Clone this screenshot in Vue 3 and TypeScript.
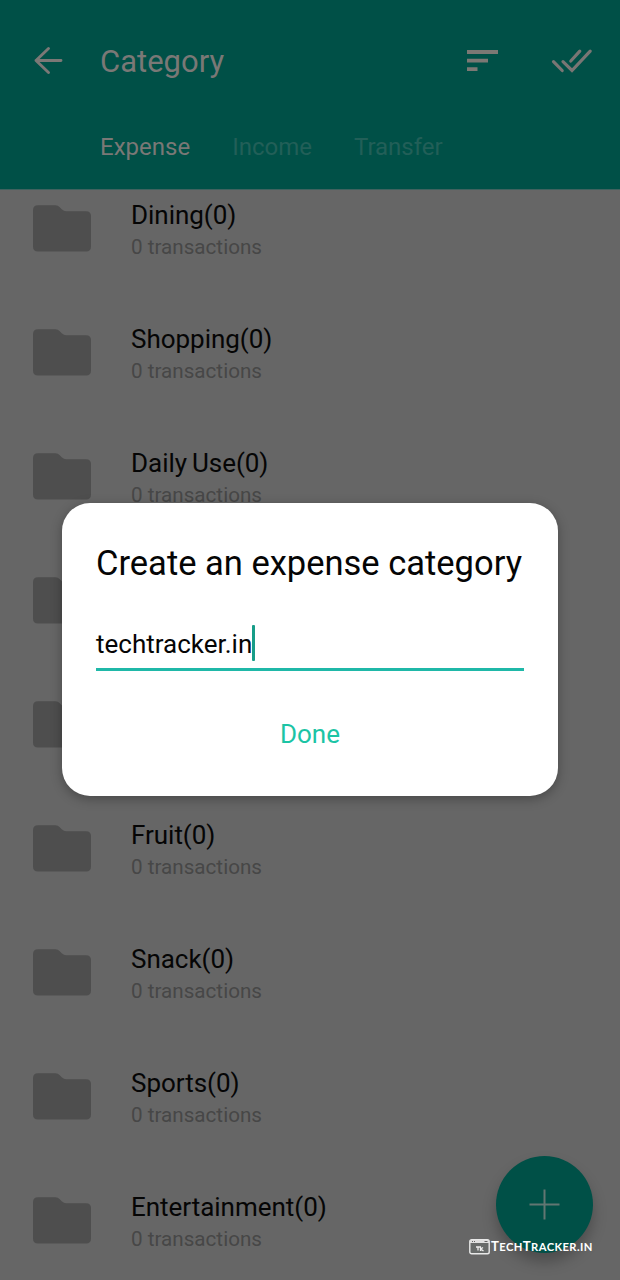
<script setup lang="ts">
interface Category {
  id: number
  name?: string
}

const tabs: string[] = ['Expense', 'Income', 'Transfer']
const activeTab = 'Expense'

const categories: Category[] = [
  { id: 1, name: 'Dining' },
  { id: 2, name: 'Shopping' },
  { id: 3, name: 'Daily Use' },
  { id: 4 },
  { id: 5 },
  { id: 6, name: 'Fruit' },
  { id: 7, name: 'Snack' },
  { id: 8, name: 'Sports' },
  { id: 9, name: 'Entertainment' },
]
</script>

<template>
  <div class="screen">
    <header class="header">
      <div class="toolbar">
        <svg class="back" width="30" height="30" viewBox="0 0 30 30">
          <path d="M28 14.500H3M15.500 2.500L3 14.500l12.500 12" />
        </svg>
        <h1 class="title">Category</h1>
        <svg class="sort" width="31" height="22" viewBox="0 0 31 22">
          <path d="M0 0h31v4H0zM0 8.800h21v3.600H0zM0 17.300h10.500v3.700H0z" />
        </svg>
        <svg class="checks" width="42" height="26" viewBox="0 0 42 26">
          <path d="M2.500 13.700l8.700 8.800M12 13.700l9 8.800L39.200 3.200M19.800 13L28.800 3.200" />
        </svg>
      </div>
      <nav class="tabs">
        <span v-for="t in tabs" :key="t" class="tab" :class="{ active: t === activeTab }">{{ t }}</span>
      </nav>
    </header>

    <main class="list">
      <div v-for="c in categories" :key="c.id" class="row">
        <svg class="folder" width="58" height="47" viewBox="0 0 58 47">
          <path d="M5 .3H22.500Q25 .3 26.500 2L29 4.500Q31 6.200 33 6.200H53Q58 6.200 58 11V41.500Q58 46.500 53 46.500H5Q0 46.500 0 41.500V5.300Q0 .3 5 .3Z" />
        </svg>
        <div v-if="c.name" class="info">
          <div class="name">{{ c.name }}(0)</div>
          <div class="count">0 transactions</div>
        </div>
      </div>
    </main>

    <button class="fab" aria-label="Add">
      <svg width="32" height="32" viewBox="0 0 32 32"><path d="M15.500 .5v30M.5 15.500h30" /></svg>
    </button>

    <section class="dialog">
      <h2 class="dialog-title">Create an expense category</h2>
      <div class="field"><span class="value">techtracker.in</span><i class="caret"></i></div>
      <button class="done">Done</button>
    </section>

    <div class="brand">
      <svg width="21" height="16" viewBox="0 0 21 16">
        <rect x=".8" y=".8" width="19.400" height="13.900" rx="1.800" class="frame" />
        <path d="M1 1h19v3H1z" class="bar" />
        <path d="M3 2.500h1M5 2.500h1M15.500 2.500h3" class="dots" />
        <path d="M7 8h5M9 8v3.500M11.500 8v4M14 8.500l-2.300 1.500 2.800 2" class="mark" />
      </svg>
      <span class="brand-name"><b>T</b>ech<b>T</b>racker.in</span>
    </div>
  </div>
</template>

<style>
body {
  margin: 0;
  overflow: hidden;
}
</style>

<style scoped>
.screen {
  position: relative;
  width: 620px;
  height: 1280px;
  overflow: hidden;
  background: #666;
  font-family: Roboto, sans-serif;
  color: #050505;
}
h1, h2 {
  margin: 0;
  font-weight: 400;
}
button {
  border: 0;
  padding: 0;
  background: none;
  font-family: inherit;
}
svg {
  display: block;
  flex: none;
}
.header {
  height: 190px;
  box-sizing: border-box;
  background: #005047;
  border-bottom: 1px solid #3f625f;
}
.toolbar {
  display: flex;
  align-items: center;
  height: 122px;
  padding: 0 27px 0 33px;
}
.back {
  fill: none;
  stroke: #7b7876;
  stroke-width: 2.900;
  stroke-linecap: round;
  stroke-linejoin: round;
}
.title {
  flex: 1;
  margin-left: 37px;
  padding-top: 2px;
  font-size: 31px;
  line-height: 40px;
  color: #7a7876;
}
.sort {
  fill: #7c7874;
}
.checks {
  margin-left: 53px;
  fill: none;
  stroke: #797674;
  stroke-width: 3.200;
  stroke-linecap: round;
}
.tabs {
  display: flex;
  gap: 42px;
  padding-left: 100px;
}
.tab {
  font-size: 24px;
  line-height: 50px;
  color: #225f58;
}
.tab.active {
  color: #7a7876;
}
.list {
  padding-top: 15px;
}
.row {
  display: flex;
  height: 124px;
  padding-left: 33px;
}
.folder {
  fill: #4e4e4e;
}
.info {
  margin-left: 40px;
  margin-top: -7px;
}
.name {
  font-size: 26px;
  line-height: 34px;
  letter-spacing: -0.03px;
  word-spacing: -1.500px;
}
.count {
  font-size: 20.650px;
  line-height: 30px;
  color: #474747;
}
.fab {
  position: absolute;
  left: 496px;
  top: 1156px;
  width: 97px;
  height: 97px;
  border-radius: 50%;
  display: grid;
  place-items: center;
  background: #005047;
  box-shadow: 0 9px 14px rgba(0, 0, 0, 0.25);
}
.fab path {
  stroke: #627672;
  stroke-width: 2;
}
.dialog {
  position: absolute;
  left: 62px;
  top: 503px;
  width: 496px;
  height: 293px;
  box-sizing: border-box;
  padding: 39px 34px 0;
  display: flex;
  flex-direction: column;
  border-radius: 28px;
  background: #fff;
  box-shadow: 0 3px 12px rgba(0, 0, 0, 0.3);
}
.dialog-title {
  font-size: 34.500px;
  line-height: 42px;
  white-space: nowrap;
}
.field {
  display: flex;
  align-items: center;
  height: 39px;
  margin-top: 39px;
  padding-bottom: 6px;
  border-bottom: 3px solid #1fb8a8;
}
.value {
  padding-top: 2px;
  font-size: 26px;
}
.caret {
  width: 3px;
  height: 36px;
  border-radius: 1px;
  background: #179d88;
}
.done {
  align-self: center;
  margin-top: 43px;
  font-size: 26px;
  line-height: 40px;
  color: #1cc4a5;
}
.brand {
  position: absolute;
  left: 469px;
  top: 1238px;
  display: flex;
  align-items: center;
  color: #fff;
}
.brand-name {
  width: 102px;
  margin-left: 1px;
  font-family: Lato, sans-serif;
  text-transform: uppercase;
  font-weight: 700;
  font-size: 11.200px;
  line-height: 16px;
  letter-spacing: 0.400px;
  white-space: nowrap;
}
.brand-name b {
  font-size: 13.200px;
  font-weight: 700;
}
.frame {
  fill: #686b6a;
  stroke: #e8e8e8;
  stroke-width: 1.400;
}
.bar {
  fill: #e0e0e0;
}
.dots {
  stroke: #666;
  stroke-width: 1;
}
.mark {
  fill: none;
  stroke: #eee;
  stroke-width: 1.300;
}
</style>
